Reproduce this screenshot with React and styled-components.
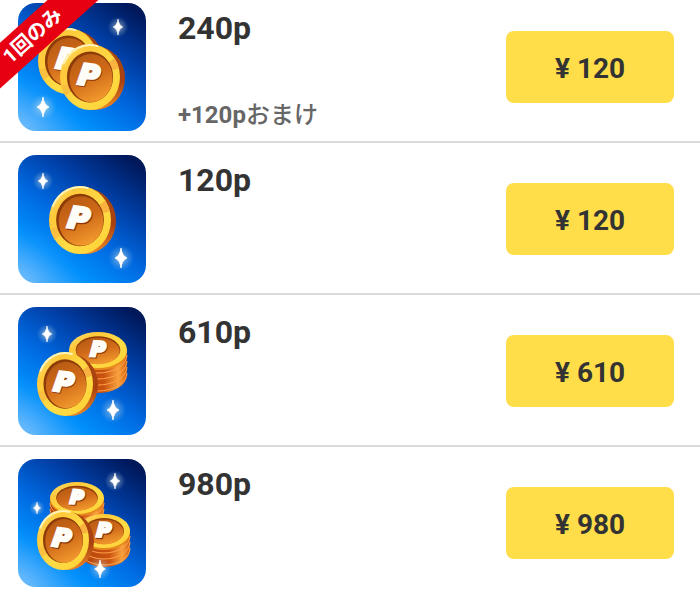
import React, { useId } from "react";
import styled, { createGlobalStyle } from "styled-components";

const GlobalStyle = createGlobalStyle`
  *, *::before, *::after {
    box-sizing: border-box;
  }
  body {
    margin: 0;
    background-color: #fff;
    color: #333;
    font-family: Roboto, "Noto Sans CJK JP", sans-serif;
  }
`;

const ListContainer = styled.ul`
  list-style: none;
  margin: 0;
  padding: 0;
`;

const ListItem = styled.li`
  position: relative;
  overflow: hidden;
  display: flex;
  align-items: center;
  gap: 32px;
  padding: 12px 26px 10px 18px;
  border-bottom: 2px solid #d9d9d9;
  &:first-child {
    padding-top: 3px;
  }
  &:last-child {
    border-bottom: none;
    padding-bottom: 0;
  }
`;

const Thumbnail = styled.svg`
  display: block;
  flex: none;
  width: 128px;
  height: 128px;
  border-radius: 18px;
`;

const Description = styled.div`
  flex: 1;
  align-self: stretch;
  display: flex;
  flex-direction: column;
  justify-content: space-between;
  h3 {
    margin: 0;
    padding-top: 6px;
    font-size: 32px;
    line-height: 38px;
    font-weight: 700;
  }
  p {
    margin: 0;
    font-size: 24px;
    line-height: 32px;
    font-weight: 700;
    color: #666;
  }
  p span {
    font-weight: 500;
  }
`;

const PriceButton = styled.button`
  flex: none;
  width: 168px;
  height: 72px;
  padding: 2px 0 0;
  border: none;
  border-radius: 8px;
  background-color: #ffde4a;
  color: #333;
  font-family: inherit;
  font-size: 28px;
  font-weight: 700;
  cursor: pointer;
`;

const Ribbon = styled.span`
  position: absolute;
  top: 19px;
  left: -47px;
  width: 160px;
  height: 34px;
  background-color: #e60012;
  color: #fff;
  font-size: 20px;
  line-height: 32px;
  font-weight: 700;
  text-align: center;
  transform: rotate(-42deg);
`;

const Emblem = ({ x, y, size, angle, shade = "#8c3508" }) => (
  <g
    transform={`translate(${x} ${y}) rotate(${angle})`}
    fontFamily="'DejaVu Sans', sans-serif"
    fontWeight="700"
    fontStyle="italic"
    fontSize={size}
    textAnchor="middle"
    strokeWidth="3"
  >
    <text x="1" y={size * 0.36 + 1} fill={shade} stroke={shade}>
      P
    </text>
    <text x="0" y={size * 0.36} fill="#fffdf8" stroke="#fffdf8">
      P
    </text>
  </g>
);

const pointOn = (x, y, rx, ry, deg) => {
  const a = (deg * Math.PI) / 180;
  return `${x + rx * Math.cos(a)} ${y + ry * Math.sin(a)}`;
};

// coin standing up, seen from slightly left
const Coin = ({ id, x, y, rx, ry }) => (
  <g>
    <ellipse cx={x + 5} cy={y + 1} rx={rx} ry={ry - 1} fill={`url(#${id}-edge)`} />
    <ellipse cx={x} cy={y} rx={rx} ry={ry} fill={`url(#${id}-rim)`} />
    <path
      d={`M${pointOn(x, y, rx - 1, ry - 1, 205)} A${rx - 1} ${ry - 1} 0 0 1 ${pointOn(x, y, rx - 1, ry - 1, 285)}`}
      fill="none"
      stroke="#fff3b8"
      strokeWidth="2"
      strokeLinecap="round"
    />
    <path
      d={`M${pointOn(x, y, rx, ry, 325)} A${rx} ${ry} 0 0 1 ${pointOn(x, y, rx, ry, 345)} L${x} ${y}Z`}
      fill="#f7a13c"
      opacity="0.7"
    />
    <path
      d={`M${pointOn(x, y, rx, ry, 145)} A${rx} ${ry} 0 0 1 ${pointOn(x, y, rx, ry, 165)} L${x} ${y}Z`}
      fill="#f9b440"
      opacity="0.6"
    />
    <ellipse cx={x} cy={y} rx={rx * 0.77} ry={ry * 0.77} fill="#8d3b08" />
    <ellipse cx={x + 1} cy={y + 1} rx={rx * 0.72} ry={ry * 0.73} fill={`url(#${id}-face)`} />
    <Emblem x={x - 1} y={y - 2} size={rx * 0.95} angle={8} />
  </g>
);

// pile of coins lying flat
const Stack = ({ id, x, y, rx, ry, layers }) => (
  <g>
    {Array.from({ length: layers }, (_, i) => layers - i).map((n) => (
      <g key={n}>
        <ellipse cx={x} cy={y + n * 6 + 1} rx={rx} ry={ry} fill={`url(#${id}-side)`} />
        <path
          d={`M${x - rx} ${y + n * 6 - 1} A${rx} ${ry} 0 0 0 ${x + rx} ${y + n * 6 - 1}`}
          fill="none"
          stroke="#ffa14a"
          strokeWidth="1"
        />
      </g>
    ))}
    <ellipse cx={x} cy={y + 2} rx={rx} ry={ry} fill="#e98a1d" />
    <ellipse cx={x} cy={y} rx={rx} ry={ry} fill={`url(#${id}-rim)`} />
    <ellipse cx={x} cy={y} rx={rx * 0.77} ry={ry * 0.77} fill="#8d3b08" />
    <ellipse cx={x} cy={y + 1} rx={rx * 0.75} ry={ry * 0.73} fill={`url(#${id}-face)`} />
    <Emblem x={x} y={y - 1} size={ry + 2} angle={4} />
  </g>
);

const Star = ({ id, x, y, r }) => (
  <g transform={`translate(${x} ${y})`}>
    <circle r={r * 1.3} fill={`url(#${id}-glow)`} />
    <path
      transform={`scale(${r / 10})`}
      d="M0 -10 Q1 -2 6 0 Q1 2 0 10 Q-1 2 -6 0 Q-1 -2 0 -10Z"
      fill="#fff"
      stroke="#fff"
      strokeWidth="0.8"
    />
  </g>
);

const CoinImage = ({ stacks = [], coins, stars }) => {
  const id = useId();
  return (
    <Thumbnail viewBox="0 0 128 128" aria-hidden="true">
      <defs>
        <linearGradient id={`${id}-bg`} x1="0.85" y1="0" x2="0.15" y2="1">
          <stop offset="0" stopColor="#001759" />
          <stop offset="0.3" stopColor="#0040a8" />
          <stop offset="0.55" stopColor="#0069e0" />
          <stop offset="0.8" stopColor="#0090fc" />
          <stop offset="1" stopColor="#48adfb" />
        </linearGradient>
        <radialGradient id={`${id}-light`} cx="0" cy="1" r="0.5">
          <stop offset="0" stopColor="#8fcbff" stopOpacity="0.6" />
          <stop offset="1" stopColor="#1a94fb" stopOpacity="0" />
        </radialGradient>
        <linearGradient id={`${id}-rim`} x1="0" y1="0" x2="1" y2="1">
          <stop offset="0" stopColor="#ffe98a" />
          <stop offset="0.25" stopColor="#ffc93a" />
          <stop offset="0.6" stopColor="#ffdc45" />
          <stop offset="1" stopColor="#ffcf33" />
        </linearGradient>
        <linearGradient id={`${id}-edge`} x1="0" y1="0" x2="0" y2="1">
          <stop offset="0" stopColor="#a8480f" />
          <stop offset="0.55" stopColor="#a84010" />
          <stop offset="1" stopColor="#f08a28" />
        </linearGradient>
        <linearGradient id={`${id}-side`} x1="0" y1="0" x2="1" y2="0">
          <stop offset="0" stopColor="#b24410" />
          <stop offset="0.6" stopColor="#c9520f" />
          <stop offset="0.85" stopColor="#f7a13c" />
          <stop offset="1" stopColor="#d4600f" />
        </linearGradient>
        <linearGradient id={`${id}-face`} x1="0.2" y1="0" x2="0.6" y2="1">
          <stop offset="0" stopColor="#b55a14" />
          <stop offset="0.5" stopColor="#d06a18" />
          <stop offset="1" stopColor="#f29a2e" />
        </linearGradient>
        <radialGradient id={`${id}-glow`}>
          <stop offset="0" stopColor="#fff6c8" stopOpacity="0.6" />
          <stop offset="1" stopColor="#9fc4e8" stopOpacity="0" />
        </radialGradient>
      </defs>
      <rect width="128" height="128" fill={`url(#${id}-bg)`} />
      <rect width="128" height="128" fill={`url(#${id}-light)`} />
      {stacks.map((stack, i) => (
        <Stack key={i} id={id} {...stack} />
      ))}
      {coins.map((coin, i) => (
        <Coin key={i} id={id} {...coin} />
      ))}
      {stars.map((star, i) => (
        <Star key={i} id={id} {...star} />
      ))}
    </Thumbnail>
  );
};

const items = [
  {
    points: 240,
    price: 120,
    bonus: 120,
    ribbon: "1回のみ",
    image: {
      coins: [
        { x: 50, y: 58, rx: 30, ry: 33 },
        { x: 72, y: 74, rx: 30, ry: 33 },
      ],
      stars: [
        { x: 100, y: 24, r: 8 },
        { x: 25, y: 104, r: 10 },
      ],
    },
  },
  {
    points: 120,
    price: 120,
    image: {
      coins: [{ x: 62, y: 65, rx: 31, ry: 34 }],
      stars: [
        { x: 25, y: 26, r: 8 },
        { x: 103, y: 103, r: 10 },
      ],
    },
  },
  {
    points: 610,
    price: 610,
    image: {
      stacks: [{ x: 80, y: 43, rx: 29, ry: 18, layers: 4 }],
      coins: [{ x: 47, y: 77, rx: 28, ry: 32 }],
      stars: [
        { x: 29, y: 27, r: 8 },
        { x: 95, y: 103, r: 10 },
      ],
    },
  },
  {
    points: 980,
    price: 980,
    image: {
      stacks: [
        { x: 59, y: 39, rx: 27, ry: 16, layers: 3 },
        { x: 86, y: 72, rx: 26, ry: 17, layers: 3 },
      ],
      coins: [{ x: 45, y: 81, rx: 26, ry: 30 }],
      stars: [
        { x: 97, y: 22, r: 8 },
        { x: 19, y: 49, r: 6 },
        { x: 82, y: 110, r: 9 },
      ],
    },
  },
];

const PointItem = ({ points, price, bonus, ribbon, image }) => (
  <ListItem>
    <CoinImage {...image} />
    {ribbon && <Ribbon>{ribbon}</Ribbon>}
    <Description>
      <h3>{points}p</h3>
      {bonus && (
        <p>
          +{bonus}p<span>おまけ</span>
        </p>
      )}
    </Description>
    <PriceButton type="button">¥ {price}</PriceButton>
  </ListItem>
);

export default function App() {
  return (
    <>
      <GlobalStyle />
      <ListContainer>
        {items.map((item) => (
          <PointItem key={item.points} {...item} />
        ))}
      </ListContainer>
    </>
  );
}
